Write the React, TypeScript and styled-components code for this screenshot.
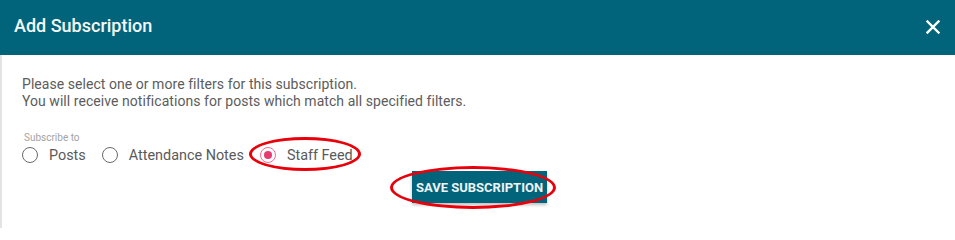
import React from "react";
import styled, { createGlobalStyle } from "styled-components";

const Global = createGlobalStyle`
  html, body { margin: 0; padding: 0; background: #ffffff; }
  body { font-family: Roboto, "Noto Sans", Arial, sans-serif; }
`;

const Modal = styled.div`
  width: 955px;
  height: 228px;
  display: flex;
  flex-direction: column;
  background: #ffffff;
  overflow: hidden;
`;

const Header = styled.div`
  height: 55px;
  flex: none;
  background: #02647a;
  display: flex;
  align-items: center;
  justify-content: space-between;
  padding: 0 10px 0 14px;
  box-sizing: border-box;
`;

const Title = styled.h2`
  margin: 0;
  font-size: 18px;
  font-weight: 500;
  color: #f4f8f9;
  letter-spacing: 0;
  padding-bottom: 4px;
`;

const CloseButton = styled.button`
  width: 24px;
  height: 24px;
  border: none;
  background: transparent;
  padding: 0;
  display: flex;
  align-items: center;
  justify-content: center;
  cursor: pointer;
  margin-bottom: 1px;
`;

const Body = styled.div`
  flex: 1;
  border-left: 2px solid #e3e3e3;
  padding: 21px 20px 0 20px;
  display: flex;
  flex-direction: column;
`;

const Intro = styled.p`
  margin: 0;
  font-size: 14px;
  line-height: 17px;
  color: #5c5c5c;
  letter-spacing: 0.05px;
`;

const Field = styled.fieldset`
  border: none;
  margin: 22px 0 0 0;
  padding: 0;
  display: flex;
  flex-direction: column;
`;

const Legend = styled.div`
  font-size: 10px;
  line-height: 12px;
  color: #a3a3a3;
  margin-left: 2px;
`;

const RadioRow = styled.div`
  display: flex;
  align-items: center;
  gap: 16px;
  margin-top: 1px;
`;

const Option = styled.label`
  position: relative;
  display: flex;
  align-items: center;
  gap: 11px;
  height: 20px;
  font-size: 14.4px;
  color: #5a5a5a;
  cursor: pointer;
`;

const Circle = styled.span<{ $checked: boolean }>`
  width: 16px;
  height: 16px;
  box-sizing: border-box;
  border-radius: 50%;
  border: 1.5px solid ${(p) => (p.$checked ? "#ef6d96" : "#6b6b6b")};
  display: flex;
  align-items: center;
  justify-content: center;
  flex: none;
  &::after {
    content: "";
    width: 8px;
    height: 8px;
    border-radius: 50%;
    background: ${(p) => (p.$checked ? "#e63a72" : "transparent")};
  }
`;

const Ring = styled.span<{ $l: number; $t: number; $w: number; $h: number }>`
  position: absolute;
  left: ${(p) => p.$l}px;
  top: ${(p) => p.$t}px;
  width: ${(p) => p.$w}px;
  height: ${(p) => p.$h}px;
  border: 3px solid #e8000b;
  border-radius: 50%;
  box-sizing: border-box;
  pointer-events: none;
`;

const Actions = styled.div`
  display: flex;
  justify-content: center;
  margin-top: 6px;
  padding-left: 2px;
`;

const SaveWrap = styled.div`
  position: relative;
`;

const SaveButton = styled.button`
  height: 32px;
  padding: 0 4px;
  border: none;
  background: #02647a;
  color: #eef3f5;
  font-family: Roboto, Arial, sans-serif;
  font-size: 13px;
  font-weight: 700;
  text-transform: uppercase;
  box-shadow: 0 2px 3px rgba(0, 0, 0, 0.25);
  cursor: pointer;
`;

const options = [
  { label: "Posts", checked: false },
  { label: "Attendance Notes", checked: false },
  { label: "Staff Feed", checked: true },
];

export default function App() {
  return (
    <>
      <Global />
      <Modal>
        <Header>
          <Title>Add Subscription</Title>
          <CloseButton aria-label="Close">
            <svg width="14" height="14" viewBox="0 0 14 14">
              <path d="M1.5 1.5 L12.5 12.5 M12.5 1.5 L1.5 12.5" stroke="#ffffff" strokeWidth="2.4" strokeLinecap="square" />
            </svg>
          </CloseButton>
        </Header>
        <Body>
          <Intro>
            Please select one or more filters for this subscription.
            <br />
            You will receive notifications for posts which match all specified filters.
          </Intro>
          <Field>
            <Legend>Subscribe to</Legend>
            <RadioRow>
              {options.map((o) => (
                <Option key={o.label}>
                  <Circle $checked={o.checked} />
                  {o.label}
                  {o.checked && <Ring $l={-11} $t={-8} $w={112} $h={34} />}
                </Option>
              ))}
            </RadioRow>
          </Field>
          <Actions>
            <SaveWrap>
              <SaveButton>Save Subscription</SaveButton>
              <Ring $l={-22} $t={-5} $w={166} $h={43} />
            </SaveWrap>
          </Actions>
        </Body>
      </Modal>
    </>
  );
}
